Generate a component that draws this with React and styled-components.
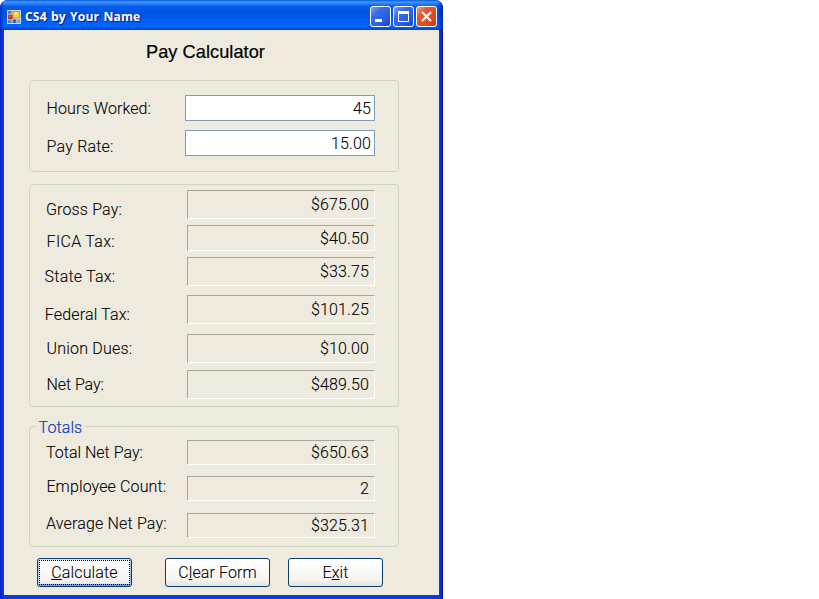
import React from "react";
import styled, { createGlobalStyle, css } from "styled-components";

const GlobalStyle = createGlobalStyle`
  * { box-sizing: border-box; }
  body { margin: 0; background: #fff; color: #000; }
`;

const Window = styled.div`
  width: 443px;
  height: 599px;
  display: flex;
  flex-direction: column;
  border-radius: 8px 8px 0 0;
  overflow: hidden;
  background: linear-gradient(90deg, #0420c8 0, #0a3be0 3px, #0a3be0 440px, #0010a0 443px);
`;

const TitleBar = styled.header`
  height: 30px;
  flex: none;
  display: flex;
  align-items: center;
  padding: 3px 6px 0 7px;
  background:
    linear-gradient(90deg, rgba(0, 20, 170, 0.6), transparent 4px, transparent 437px, rgba(0, 15, 150, 0.75)),
    linear-gradient(
      #0a58dc 0, #3d95ff 2px, #2a7bf4 4px, #0860ee 6px, #0055e5 10px,
      #0055e5 15px, #0060fa 21px, #0066ff 26px, #005be8 28px, #0142c4 30px
    );
`;

const Caption = styled.h1`
  flex: 1;
  margin: 0 0 0 4px;
  padding-top: 1px;
  font: 700 12.2px/18px "Open Sans", "Noto Sans", sans-serif;
  letter-spacing: ${(p) => p.$tracking}px;
  word-spacing: 1px;
  color: #fff;
  text-shadow: 1px 1px 1px #0a1883;
`;

const CaptionButtons = styled.div`
  display: flex;
  gap: 2px;
`;

const CaptionButton = styled.button`
  width: 21px;
  height: 21px;
  padding: 0;
  border: 1px solid #fff;
  border-radius: 3px;
  background: ${(p) =>
    p.$close
      ? "linear-gradient(135deg, #f0a088 0, #e2583a 30%, #dc4a24 70%, #c23a14 100%)"
      : "linear-gradient(135deg, #7ba4f5 0, #3a6cec 30%, #2a5fe6 65%, #1644c8 100%)"};

  svg { display: block; }
`;

const Form = styled.main`
  flex: 1;
  margin: 0 4px 4px;
  padding: 11px 40px 0 25px;
  background: #eeeadd;
  font: 300 16px/19px Roboto, "Liberation Sans", sans-serif;
  -webkit-text-stroke: 0.1px #000;
`;

const Heading = styled.h2`
  height: 22px;
  margin: 0 0 0 117px;
  font: 400 18.2px/22px "Liberation Sans", Arial, sans-serif;
  letter-spacing: 0.05px;
  -webkit-text-stroke: 0.2px #000;
`;

const Group = styled.section`
  position: relative;
  width: 370px;
  height: ${(p) => p.$height}px;
  margin-top: ${(p) => p.$gap}px;
  padding: ${(p) => p.$inset}px 0 0 14px;
  border: 1px solid #d3d1c0;
  border-radius: 4px;
`;

const Legend = styled.span`
  position: absolute;
  top: -9px;
  left: 6px;
  padding: 0 3px 0 2.5px;
  background: #eeeadd;
  color: #0b40b8;
  letter-spacing: ${(p) => p.$tracking}px;
  -webkit-text-stroke: 0.2px #0b40b8;
`;

const Row = styled.div`
  display: flex;
  height: ${(p) => p.$height}px;
  margin-top: ${(p) => p.$gap}px;
`;

const Label = styled.span`
  width: ${(p) => p.$width}px;
  flex: none;
  padding: ${(p) => p.$drop}px 0 0 ${(p) => p.$indent}px;
  letter-spacing: ${(p) => p.$tracking}px;
  white-space: nowrap;
`;

const field = css`
  letter-spacing: 0.12px;
  text-align: right;
`;

const Entry = styled.div`
  ${field}
  width: 190px;
  padding: 3px 3px 0 0;
  border: 1px solid #7f9db9;
  background: #fff;
`;

const Result = styled.div`
  ${field}
  width: 188px;
  padding: ${(p) => p.$inset}px 5px 0 0;
  border: 1px solid;
  border-color: #a7a498 #fffefa #fffefa #a7a498;
`;

const Actions = styled.div`
  display: flex;
  margin: 11px 0 0 8px;
`;

const PushButton = styled.button`
  width: ${(p) => p.$width}px;
  height: 29px;
  margin-right: ${(p) => p.$after}px;
  padding: 0;
  border: 1px solid #0d3c75;
  border-radius: 3px;
  background: linear-gradient(#fff, #f6f5f1 75%, #e4e1d7);
  color: #000;
  font: inherit;
  line-height: 27px;
  letter-spacing: ${(p) => p.$tracking}px;
  box-shadow: ${(p) =>
    p.$focused
      ? "inset 0 1px #cee7ff, inset 1px 0 #b4cdf4, inset -1px 0 #9db9ec, inset 0 -2px #7596dc"
      : "none"};
  outline: ${(p) => (p.$focused ? "1px dotted #000" : "none")};
  outline-offset: -3px;

  u {
    text-decoration-thickness: 1px;
    text-underline-offset: 1px;
    text-decoration-skip-ink: none;
  }
`;

const inputs = [
  { label: "Hours Worked:", value: "45", height: 26, gap: 0, drop: 4, indent: 2.6, tracking: 0.1 },
  { label: "Pay Rate:", value: "15.00", height: 26, gap: 9, drop: 7, indent: 2.6, tracking: 0.2 },
];

const results = [
  { label: "Gross Pay:", value: "$675.00", height: 29, gap: 0, inset: 4, drop: 10, indent: 2, tracking: 0.15 },
  { label: "FICA Tax:", value: "$40.50", height: 26, gap: 6, inset: 3, drop: 7, indent: 2.6, tracking: 0.3 },
  { label: "State Tax:", value: "$33.75", height: 29, gap: 6, inset: 4, drop: 10, indent: 0.6, tracking: 0.2 },
  { label: "Federal Tax:", value: "$101.25", height: 29, gap: 9, inset: 4, drop: 10, indent: 0.8, tracking: 0.15 },
  { label: "Union Dues:", value: "$10.00", height: 29, gap: 10, inset: 4, drop: 5, indent: 2.6, tracking: 0.2 },
  { label: "Net Pay:", value: "$489.50", height: 29, gap: 7, inset: 4, drop: 5, indent: 2.4, tracking: -0.05 },
];

const totals = [
  { label: "Total Net Pay:", value: "$650.63", height: 25, gap: 0, inset: 2, drop: 3, indent: 2, tracking: 0 },
  { label: "Employee Count:", value: "2", height: 25, gap: 11, inset: 2, drop: 1, indent: 2.4, tracking: 0.12 },
  { label: "Average Net Pay:", value: "$325.31", height: 25, gap: 12, inset: 2, drop: 1, indent: 2, tracking: 0.17 },
];

function FormIcon() {
  return (
    <svg width="14" height="14" viewBox="0 0 15 15">
      <rect width="15" height="15" rx="1" fill="#d5dfec" />
      <rect x="1" y="1" width="4" height="3" fill="#5f7896" />
      <rect x="1" y="5" width="5" height="5" fill="#b92c1c" />
      <rect x="2" y="6" width="2" height="2" fill="#f06a50" />
      <rect x="6" y="1" width="8" height="8" fill="#c99312" />
      <rect x="7" y="2" width="6" height="6" fill="#f7d34c" />
      <rect x="8" y="3" width="3" height="2" fill="#fff0a4" />
      <rect x="1" y="11" width="4" height="3" fill="#587da9" />
      <rect x="6" y="10" width="4" height="4" fill="#3568ba" />
      <rect x="11" y="10" width="3" height="4" fill="#7da0d2" />
    </svg>
  );
}

function ResultRows({ rows }) {
  return rows.map((r) => (
    <Row key={r.label} $height={r.height} $gap={r.gap}>
      <Label $width={143} $drop={r.drop} $indent={r.indent} $tracking={r.tracking}>{r.label}</Label>
      <Result $inset={r.inset}>{r.value}</Result>
    </Row>
  ));
}

export default function App() {
  return (
    <Window>
      <GlobalStyle />
      <TitleBar>
        <FormIcon />
        <Caption $tracking={0.1}>CS4 by Your Name</Caption>
        <CaptionButtons>
          <CaptionButton aria-label="Minimize">
            <svg width="19" height="19"><path d="M4 13.5h7" stroke="#fff" strokeWidth="3" /></svg>
          </CaptionButton>
          <CaptionButton aria-label="Maximize">
            <svg width="19" height="19">
              <path d="M4.5 5v9.5h10V5" fill="none" stroke="#fff" />
              <path d="M4 5.5h11" stroke="#fff" strokeWidth="3" />
            </svg>
          </CaptionButton>
          <CaptionButton $close aria-label="Close">
            <svg width="19" height="19"><path d="M5 5l9 9M14 5l-9 9" stroke="#fff" strokeWidth="2.2" /></svg>
          </CaptionButton>
        </CaptionButtons>
      </TitleBar>
      <Form>
        <Heading>Pay Calculator</Heading>
        <Group $height={92} $gap={17} $inset={14}>
          {inputs.map((r) => (
            <Row key={r.label} $height={r.height} $gap={r.gap}>
              <Label $width={141} $drop={r.drop} $indent={r.indent} $tracking={r.tracking}>{r.label}</Label>
              <Entry>{r.value}</Entry>
            </Row>
          ))}
        </Group>
        <Group $height={223} $gap={12} $inset={5}>
          <ResultRows rows={results} />
        </Group>
        <Group $height={121} $gap={19} $inset={13}>
          <Legend $tracking={0.1}>Totals</Legend>
          <ResultRows rows={totals} />
        </Group>
        <Actions>
          <PushButton $width={95} $after={33} $tracking={0.15} $focused><u>C</u>alculate</PushButton>
          <PushButton $width={105} $after={18} $tracking={0.12}>C<u>l</u>ear Form</PushButton>
          <PushButton $width={95} $after={0} $tracking={0.1}>E<u>x</u>it</PushButton>
        </Actions>
      </Form>
    </Window>
  );
}
